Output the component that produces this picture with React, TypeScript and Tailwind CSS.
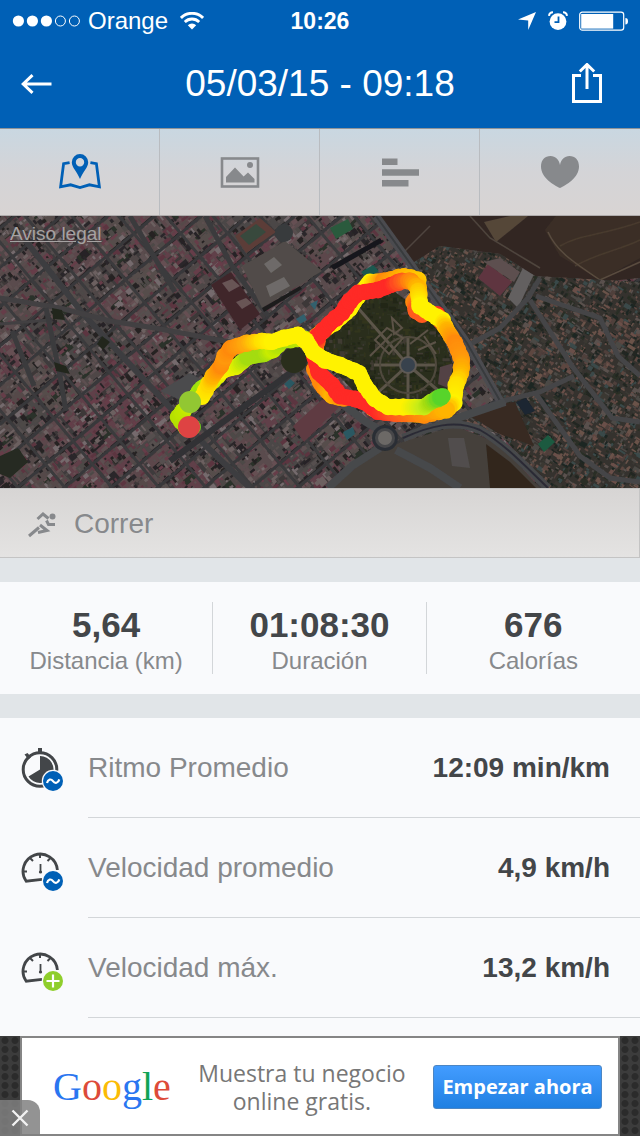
import type { ReactNode } from "react";

type Point = [number, number, string];

function seeded(seed: number) {
  let s = seed;
  return () => {
    s = (s * 1664525 + 1013904223) % 4294967296;
    return s / 4294967296;
  };
}

function mix(a: string, b: string, t: number) {
  const ch = (c: string, i: number) => parseInt(c.slice(1 + i * 2, 3 + i * 2), 16);
  const v = [0, 1, 2].map((i) => Math.round(ch(a, i) + (ch(b, i) - ch(a, i)) * t));
  return `rgb(${v.join(",")})`;
}

const LIME = "#a4dc10";
const GREEN = "#57d42a";
const YELLOW = "#fff200";
const AMBER = "#ffb400";
const ORANGE = "#ff8a0c";
const FLAME = "#ff5a1e";
const RED = "#ff2a26";

const TRACKS: Point[][] = [
  [[193, 211, "#6fc51c"], [186, 211, LIME], [178, 201, "#b5e000"], [190, 187, "#c8ec00"], [202, 172, "#9be010"], [213, 165, "#c8ec00"], [223, 154, YELLOW], [236, 151, "#e6f200"], [248, 141, LIME], [264, 138, LIME], [273, 134, "#c8ec00"], [283, 124, LIME], [305, 123, "#c4e800"]],
  [[202, 181, YELLOW], [209, 168, "#ffd800"], [213, 160, AMBER], [221, 150, ORANGE], [225, 140, "#ff980c"], [231, 132, ORANGE], [247, 127, "#ffa80c"], [262, 125, "#ffe000"], [272, 126, YELLOW], [284, 122, YELLOW], [298, 119, YELLOW], [306, 126, YELLOW]],
  [[316, 120, ORANGE], [334, 107, YELLOW], [350, 93, YELLOW], [358, 80, YELLOW], [370, 66, YELLOW], [384, 65, ORANGE], [404, 60, AMBER], [418, 64, "#ffc800"], [419, 77, "#ffb000"], [414, 86, ORANGE], [416, 95, FLAME], [422, 99, FLAME]],
  [[316, 132, ORANGE], [318, 120, RED], [330, 107, RED], [342, 97, RED], [350, 85, RED], [358, 77, RED], [378, 74, RED], [391, 69, RED], [402, 65, FLAME], [411, 65, ORANGE], [418, 72, AMBER], [420, 88, YELLOW]],
  [[437, 98, RED], [444, 110, ORANGE]],
  [[418, 75, "#ffc800"], [420, 90, YELLOW], [430, 97, YELLOW], [442, 104, YELLOW], [447, 114, AMBER], [455, 127, ORANGE], [462, 144, "#ff980c"], [461, 157, AMBER], [456, 169, "#ffe000"], [454, 187, YELLOW], [446, 194, AMBER], [424, 199, ORANGE], [398, 198, YELLOW], [373, 193, YELLOW]],
  [[314, 153, ORANGE], [323, 171, ORANGE], [332, 180, AMBER], [344, 183, ORANGE]],
  [[314, 140, RED], [319, 157, RED], [332, 169, RED], [340, 180, RED], [355, 183, RED], [366, 187, RED], [378, 196, RED], [397, 198, FLAME], [421, 198, ORANGE], [445, 193, AMBER]],
  [[306, 124, YELLOW], [313, 136, YELLOW], [325, 144, YELLOW], [340, 149, YELLOW], [359, 157, YELLOW], [365, 170, YELLOW], [375, 183, YELLOW], [388, 191, YELLOW], [407, 191, YELLOW], [424, 191, "#c8ec18"], [431, 186, LIME], [441, 181, GREEN], [443, 180, GREEN]],
];

function Track({ points, seed }: { points: Point[]; seed: number }) {
  const rnd = seeded(seed);
  const dots: ReactNode[] = [];
  for (let i = 0; i < points.length - 1; i++) {
    const [x1, y1, c1] = points[i];
    const [x2, y2, c2] = points[i + 1];
    const n = Math.max(2, Math.ceil(Math.hypot(x2 - x1, y2 - y1) / 2));
    for (let k = 0; k <= n; k++) {
      const t = k / n;
      const bump = k % 4 === 0 ? rnd() * 1.1 : 0;
      dots.push(<circle key={`${i}-${k}`} cx={x1 + (x2 - x1) * t} cy={y1 + (y2 - y1) * t} r={7.8 + bump} fill={mix(c1, c2, t)} />);
    }
  }
  return <g>{dots}</g>;
}

function roofs(seed: number, x0: number, y0: number, x1: number, y1: number, step: number, size: number, palette: string[]) {
  const rnd = seeded(seed);
  const out: ReactNode[] = [];
  for (let y = y0; y < y1; y += step) {
    for (let x = x0; x < x1; x += step) {
      const w = size * (0.3 + rnd() * rnd() * 1.6);
      const h = size * (0.3 + rnd() * rnd() * 1.4);
      const fill = palette[Math.floor(rnd() * palette.length)];
      out.push(<rect key={`${x}-${y}`} x={x + rnd() * 5} y={y + rnd() * 5} width={w} height={h} fill={fill} />);
    }
  }
  return out;
}

const CITY = ["#5d5051", "#564a4a", "#665053", "#663d48", "#5c3540", "#4e4847", "#6c6060", "#262325", "#2b282a", "#57504f", "#252322", "#746b6d"];
const VILLAS = ["#5d4641", "#4f3f3b", "#6a5249", "#232820", "#292e25", "#3b3833", "#6b5048", "#4c4845", "#1f2724", "#5a514e", "#3a4a4a"];

function blocks() {
  const rnd = seeded(19);
  const out: ReactNode[] = [];
  const tones = ["#544a4a", "#4f4747", "#5a4b4d", "#5c464b", "#4b4646", "#574e4c", "#603f48"];
  for (let r = -9; r < 13; r++) {
    for (let c = -11; c < 13; c++) {
      const x = c * 36 + (r % 3) * 5;
      const y = r * 30;
      out.push(
        <g key={`${r}:${c}`}>
          <rect x={x} y={y} width="32" height="26" fill={tones[Math.floor(rnd() * tones.length)]} />
          <rect x={x} y={y + 26} width="32" height="2" fill="#222123" />
          <rect x={x + 8 + rnd() * 6} y={y + 9} width={10 + rnd() * 6} height={4 + rnd() * 5} fill={rnd() > 0.6 ? "#2c3029" : "#3d3738"} />
        </g>,
      );
    }
  }
  return out;
}

function alleys() {
  const lines: ReactNode[] = [];
  for (let r = -9; r < 13; r++) {
    lines.push(<path key={`h${r}`} d={`M-420 ${r * 30 - 2}H460`} stroke="#39383a" strokeWidth="3" />);
  }
  for (let c = -11; c < 13; c++) {
    lines.push(<path key={`v${c}`} d={`M${c * 36 - 2} -280V400`} stroke="#3b3a3c" strokeWidth="3" />);
  }
  return lines;
}

function RouteMap() {
  return (
    <svg viewBox="0 0 640 272" preserveAspectRatio="xMidYMid slice" className="block h-full w-full" role="img" aria-label="Mapa del recorrido">
      <defs>
        <clipPath id="east"><path d="M408 50L440 30L500 38L535 60L640 66V272H548L500 218L455 205L505 188Z" /></clipPath>
        <clipPath id="park"><path d="M382 66L330 104L316 126L330 150L362 184L440 190L456 160L440 110Z" /></clipPath>
        <filter id="soft"><feGaussianBlur stdDeviation="0.6" /></filter>
      </defs>
      <rect width="640" height="272" fill="#3e3b3c" />
      <g filter="url(#soft)">
        <g transform="translate(120 110) rotate(-40)">
          {blocks()}
          {roofs(7, -380, -280, 440, 400, 5, 6, CITY)}
          {alleys()}
        </g>
        <path d="M25 24L85 100L150 170L207 231L250 272" fill="none" stroke="#3d3e40" strokeWidth="6" />
        <path d="M0 82L60 92L110 105L155 112L240 128" fill="none" stroke="#424042" strokeWidth="5" />
        <path d="M0 108L50 104" stroke="#424042" strokeWidth="3" />
        <path d="M46 92L60 160L66 195M12 115L34 170M130 0L175 76M205 0L232 50L268 100" fill="none" stroke="#3b3b3e" strokeWidth="5" />
        <path d="M170 245L238 195L300 150L320 120" fill="none" stroke="#303135" strokeWidth="6" />
        <path d="M242 50L285 25L322 55L262 92Z" fill="#514c48" />
        <path d="M264 48l10-7 8 8-11 8zM266 70l18-9 6 9-20 11z" fill="#6e6b69" />
        <path d="M262 92L300 70L302 73L264 96Z" fill="#1e1d1f" />
        <path d="M211 69L231 56L260 98L240 114Z" fill="#41262c" />
        <path d="M222 67l10-4 8 7-11 6zM236 86l10-4 6 5-10 6z" fill="#675455" />
        <path d="M235 20L260 2L276 16L246 37Z" fill="#5b3d38" />
        <path d="M240 20L256 8L266 16L249 29Z" fill="#38483e" />
        <circle cx="284" cy="17" r="9" fill="#383b3d" />
        <path d="M293 210L324 182L340 190L304 226Z" fill="#5e3a42" />
        <path d="M160 175L190 157L208 168L185 186Z" fill="#4b4b4e" />
        <circle cx="294" cy="144" r="13" fill="#2a2f1c" />
        <path d="M0 240L18 232L28 246L10 262L0 258Z" fill="#252b20" />
        <path d="M52 92l10 2 3 10-12-1zM102 120l8 6-7 8-6-6zM54 146l12 4 4 8-14-3z" fill="#22281f" />
        <path d="M330 12l18-9 5 10-17 10z" fill="#2a5a3e" />
        <path d="M361 56l12-7 6 6-12 8z" fill="#1f5850" />
        <path d="M330 50L380 22L383 26L334 54Z" fill="#19181b" />
        <path d="M310 88l8-4-3 10zM296 103l8-5 3 6-7 4z" fill="#32606d" />
        <path d="M284 168l6-5 5 4-6 6zM343 216l10-5 2 7-8 6z" fill="#2b5962" />
      </g>
      <g filter="url(#soft)">
        <path d="M372 0H640V62L600 66L535 60L500 38L440 30L408 50Z" fill="#332824" />
        <path d="M545 14L556 0H640V42L600 64L560 40Z" fill="#3b2f27" />
        <path d="M484 6L510 0H528L496 26Z" fill="#554639" />
        <path d="M560 30C580 18 600 20 640 6M575 50C600 36 620 34 640 24" fill="none" stroke="#483a2e" strokeWidth="1.500" />
        <path d="M548 16C556 34 570 44 600 64L640 46" fill="none" stroke="#5a4c3f" strokeWidth="1.500" />
        <path d="M470 0L490 22L540 52M430 10L400 40" fill="none" stroke="#4f453d" strokeWidth="1.500" />
        <g clipPath="url(#east)">
          <rect x="400" y="20" width="240" height="252" fill="#34322e" />
          <g transform="translate(520 150) rotate(32)">{roofs(31, -180, -170, 200, 180, 4, 5, VILLAS)}</g>
          <path d="M478 62L488 48L512 66L500 80Z" fill="#5e3640" />
          <path d="M484 46L500 42L520 56L514 66Z" fill="#5d5050" />
          <path d="M508 82L524 50L534 58L518 92Z" fill="#636060" />
          <path d="M458 135L500 112L528 82L540 62M536 80L600 102L618 140L640 160M530 84L572 150L612 202L640 206M503 185L540 176L574 160M536 178L580 240L610 262L640 266" fill="none" stroke="#454547" strokeWidth="5" />
          <path d="M478 190L515 186L534 230L500 218L470 200Z" fill="#372a23" />
          <path d="M516 186l10-4 9 13-10 4z" fill="#1c2530" />
          <path d="M538 228l10-9 7 7-11 10z" fill="#1b5a41" />
          <path d="M462 150L480 160L496 180L470 196L460 190Z" fill="#51443a" opacity="0.800" />
        </g>
        <path d="M376 0L412 50L467 127L503 190" fill="none" stroke="#4b4c50" strokeWidth="8" />
        <path d="M376 0L412 50L467 127L503 190" fill="none" stroke="#393a3e" strokeWidth="2" />
      </g>
      <g filter="url(#soft)">
        <path d="M382 66L330 104L316 126L330 150L362 184L440 190L456 160L440 110Z" fill="#2b2e1f" />
        <g clipPath="url(#park)">
          {roofs(63, 320, 62, 460, 195, 5, 5, ["#2d3120", "#242919", "#33351f", "#3f3b32", "#212619"])}
          <path d="M358 92L408 149V200M408 149V120M408 149L372 182M408 149H374M408 149L440 176M408 149H436" fill="none" stroke="#5b5448" strokeWidth="3" />
          <circle cx="408" cy="149" r="28" fill="none" stroke="#504a3e" strokeWidth="2" />
          <path d="M375 124l12-12 16 10-14 16zM392 102l10 10-8 6zM370 140l22-22M410 128l18-14M418 134l18-8M424 120l12 18" fill="none" stroke="#5b5246" strokeWidth="2" />
          <path d="M440 151L454 147L448 172L438 168Z" fill="#524245" />
        </g>
        <circle cx="408" cy="149" r="9" fill="#5f5a55" />
        <circle cx="408" cy="149" r="7" fill="#37424d" />
        <path d="M380 234L403 226L455 210L500 228L540 272H328Z" fill="#45403b" />
        <path d="M448 222L464 222L470 252L452 250Z" fill="#514e4d" />
        <path d="M486 228L510 246L536 272H490Z" fill="#32261f" />
        <path d="M340 186L366 206L380 214M380 232L352 250L328 272M403 222C430 210 455 203 480 214C505 228 525 250 548 272M440 208L505 186M396 234L430 252L460 272" fill="none" stroke="#46484c" strokeWidth="8" />
        <path d="M403 222C430 210 455 203 480 214C505 228 525 250 548 272" fill="none" stroke="#2c2b34" strokeWidth="2" />
        <circle cx="385" cy="222" r="13" fill="#2c2f34" />
        <circle cx="385" cy="222" r="10" fill="#46474a" />
        <circle cx="385" cy="222" r="7" fill="#6c6966" />
      </g>
      {TRACKS.map((t, i) => <Track key={i} points={t} seed={i + 3} />)}
      <circle cx="190" cy="186" r="11" fill="#92c732" />
      <circle cx="189" cy="211" r="11" fill="#de4343" />
    </svg>
  );
}

function StatusBar() {
  return (
    <div className="grid h-10 grid-cols-[1fr_auto_1fr] items-center px-3 pt-px text-white">
      <div className="flex items-center gap-2">
        <svg width="68" height="12" viewBox="0 0 68 12" fill="none" aria-label="Señal">
          {[6.4, 20.4, 34.4].map((x) => <circle key={x} cx={x} cy="6" r="5.600" fill="#fff" />)}
          {[48.4, 62.4].map((x) => <circle key={x} cx={x} cy="6" r="5" stroke="#fff" />)}
        </svg>
        <span className="text-[24px] leading-8">Orange</span>
        <svg width="24" height="18" viewBox="0 0 24 18" className="ml-1" fill="none" stroke="#fff" aria-label="Wi-Fi">
          <path d="M0.9 5.9A15.8 15.8 0 0 1 23.1 5.9" strokeWidth="3" />
          <path d="M4.8 10A10.2 10.2 0 0 1 19.2 10" strokeWidth="2.800" />
          <path d="M7.8 13.3A6 6 0 0 1 16.2 13.3L12 17.6Z" fill="#fff" stroke="none" />
        </svg>
      </div>
      <time className="text-[23px] leading-8 font-bold">10:26</time>
      <div className="flex items-center justify-end gap-[11px]">
        <svg width="20" height="20" viewBox="0 0 20 20" fill="#fff" aria-label="Ubicación"><path d="M19 1L11.2 19V9.4L1 8.6Z" /></svg>
        <svg width="20" height="20" viewBox="0 0 20 20" fill="none" aria-label="Alarma">
          <circle cx="10" cy="10.600" r="8.400" fill="#fff" />
          <path d="M10.5 5.5V11.2H6.5" stroke="#0060b6" strokeWidth="1.800" />
          <path d="M1 4.8A4 4 0 0 1 5 1.2M19 4.8A4 4 0 0 0 15 1.2" stroke="#fff" strokeWidth="2" />
        </svg>
        <svg width="49" height="20" viewBox="0 0 49 20" fill="none" aria-label="Batería">
          <rect x="0.700" y="1.200" width="44" height="18" rx="2.600" stroke="#fff" strokeWidth="1.200" />
          <rect x="2.200" y="3" width="32" height="14.600" fill="#fff" />
          <path d="M46.400 7Q49 7 49 10.200T46.400 13.600Z" fill="#fff" />
        </svg>
      </div>
    </div>
  );
}

const TABS: { label: string; icon: ReactNode }[] = [
  {
    label: "Mapa",
    icon: (
      <svg width="42" height="36" viewBox="0 0 42 36" fill="none">
        <path d="M10.6 8.6L4.6 9.6L1.6 32.8L11.6 30.8L21 33.6L30.4 30.8L40.4 32.8L37.4 9.6L31.4 8.6" stroke="#0060b6" strokeWidth="2.800" />
        <path fillRule="evenodd" d="M21 0A8.200 8.200 0 0 0 12.800 8.200C12.800 13.500 18 17.500 21 25C24 17.500 29.200 13.500 29.200 8.200A8.200 8.200 0 0 0 21 0ZM21 4A4.200 4.200 0 1 1 21 12.400A4.200 4.200 0 0 1 21 4Z" fill="#0060b6" />
      </svg>
    ),
  },
  {
    label: "Fotos",
    icon: (
      <svg width="40" height="36" viewBox="0 0 40 36" fill="none">
        <rect x="2" y="4.500" width="36" height="28" stroke="#87898c" strokeWidth="2.600" />
        <path d="M6 28.500V23L15 13.500L23.600 22.400L28 18.500L34.500 25V28.500Z" fill="#87898c" />
        <circle cx="30" cy="11" r="3" fill="#87898c" />
      </svg>
    ),
  },
  {
    label: "Vueltas",
    icon: (
      <svg width="38" height="36" viewBox="0 0 38 36" fill="#87898c">
        <path d="M1 4.500h15.500v6.500H1zM1 15.200h37v6.500H1zM1 26h26.500v6.500H1z" />
      </svg>
    ),
  },
  {
    label: "Frecuencia cardíaca",
    icon: (
      <svg width="40" height="36" viewBox="0 0 40 36" fill="#87898c">
        <path d="M20 34C14 31 1 24 1 12.500C1 6 5 2 10.500 2C15.500 2 19 5.500 20 11C21 5.500 24.500 2 29.500 2C35 2 39 6 39 12.500C39 24 26 31 20 34Z" />
      </svg>
    ),
  },
];

function Badge({ kind }: { kind: "avg" | "max" }) {
  return (
    <g>
      <circle cx="33" cy="41" r="11.200" fill="#f9fafc" />
      <circle cx="33" cy="41" r="10" fill={kind === "avg" ? "#0060b6" : "#8fce2c"} />
      {kind === "avg" ? (
        <path d="M27 43C28 39 31 38.500 33 41.200S38.300 43.200 39.300 39.400" fill="none" stroke="#fff" strokeWidth="2.200" />
      ) : (
        <path d="M33 34.500V47.500M26.500 41H39.500" stroke="#fff" strokeWidth="2.200" />
      )}
    </g>
  );
}

function StopwatchIcon() {
  return (
    <svg width="44" height="52" viewBox="0 2 44 52" fill="none">
      <circle cx="20" cy="29.500" r="16.800" stroke="#434649" strokeWidth="3" />
      <path d="M18 8h4v5h-4zM4.500 14.500l3-1.500 3.500 4-2.500 2.500z" fill="#434649" />
      <path d="M20 16A13.500 13.500 0 1 1 8.500 36.500L20 29.500Z" fill="#434649" />
      <Badge kind="avg" />
    </svg>
  );
}

function GaugeIcon({ kind }: { kind: "avg" | "max" }) {
  return (
    <svg width="44" height="52" viewBox="0 2 44 52" fill="none">
      <path d="M37.400 30A17.200 17.200 0 1 0 6.200 41.200L22 39.400" stroke="#434649" strokeWidth="2.800" />
      <path d="M20 14v4M10 18l3 3M30.500 18l-3 3M3 31.500h4" stroke="#434649" strokeWidth="2" />
      <path d="M20.500 24v9" stroke="#434649" strokeWidth="1.800" />
      <circle cx="20.500" cy="32" r="1.600" fill="#434649" />
      <Badge kind={kind} />
    </svg>
  );
}

const TOTALS = [
  { value: "5,64", label: "Distancia (km)" },
  { value: "01:08:30", label: "Duración" },
  { value: "676", label: "Calorías" },
];

const METRICS = [
  { label: "Ritmo Promedio", value: "12:09 min/km", icon: <StopwatchIcon /> },
  { label: "Velocidad promedio", value: "4,9 km/h", icon: <GaugeIcon kind="avg" /> },
  { label: "Velocidad máx.", value: "13,2 km/h", icon: <GaugeIcon kind="max" /> },
];

function AdBanner() {
  return (
    <aside className="relative h-[100px] bg-[#303030] bg-[radial-gradient(circle,#2b2b2b_3px,#3c3c3c_4px)] bg-size-[10px_9px] px-5">
      <div className="flex h-full items-center justify-between border-2 border-[#858585] bg-white pt-0.5 pr-4 pl-[31px]">
        <div className="font-['Liberation_Serif',serif] text-[40px] leading-[48px]" aria-label="Google">
          <span className="text-[#2a76f0]">G</span>
          <span className="text-[#dd4b39]">o</span>
          <span className="text-[#fbbc05]">o</span>
          <span className="text-[#2a76f0]">g</span>
          <span className="text-[#10a355]">l</span>
          <span className="text-[#dd4b39]">e</span>
        </div>
        <p className="text-center font-['Open_Sans',sans-serif] text-[23px] leading-7 text-[#777777]">
          Muestra tu negocio
          <br />
          online gratis.
        </p>
        <button type="button" className="h-11 w-[169px] rounded-[3px] border border-[#4c86c4] bg-linear-to-b from-[#429cff] to-[#1f80e2] font-['Open_Sans',sans-serif] text-[20px] font-bold text-white">
          Empezar ahora
        </button>
      </div>
      <button type="button" aria-label="Cerrar anuncio" className="absolute bottom-0 left-0 flex h-9 w-10 items-center justify-center rounded-tr-xl bg-[#808080]/85">
        <svg width="18" height="18" viewBox="0 0 18 18" stroke="#f2f2f2" strokeWidth="2.400"><path d="M1.500 1.500L16.500 16.500M16.500 1.500L1.500 16.500" /></svg>
      </button>
    </aside>
  );
}

export default function App() {
  return (
    <div className="flex min-h-screen flex-col bg-[#e1e5e8] font-['Liberation_Sans',sans-serif]">
      <header className="bg-[#0060b6] text-white">
        <StatusBar />
        <div className="grid h-[88px] grid-cols-[1fr_auto_1fr] items-center pr-9 pl-5">
          <button type="button" aria-label="Volver" className="flex w-9 items-center">
            <svg width="32" height="20" viewBox="0 0 32 20" fill="none" stroke="#fff" strokeWidth="3"><path d="M31.500 10H3M12.500 1.200L3.200 10L12.500 18.800" /></svg>
          </button>
          <h1 className="pl-4 text-[37px] leading-[44px]">05/03/15 - 09:18</h1>
          <button type="button" aria-label="Compartir" className="justify-self-end">
            <svg width="34" height="42" viewBox="0 0 34 42" fill="none" stroke="#fff" strokeWidth="3"><path d="M11 12.500H3.500V38.500H30.500V12.500H23M17 26V2M9.800 8.500L17 1.500L24.200 8.500" /></svg>
          </button>
        </div>
      </header>

      <nav className="grid h-[88px] grid-cols-4 border-t border-b border-t-[#8f9499] border-b-[#aeabab] bg-linear-to-b from-[#c9d7e1] via-[#d4d4d7] to-[#d8d4d3]">
        {TABS.map((tab) => (
          <button key={tab.label} type="button" aria-label={tab.label} className="flex items-center justify-center border-r border-[#b9bcc0] last:border-r-0">
            {tab.icon}
          </button>
        ))}
      </nav>

      <section className="relative h-[272px] overflow-hidden">
        <RouteMap />
        <a href="#aviso" className="absolute top-1 left-[10px] text-[19px] leading-7 text-[#a5a2a2] underline">Aviso legal</a>
      </section>

      <div className="flex h-[70px] items-center gap-4 border-t border-r border-b border-[#c4c4c4] bg-linear-to-b from-[#d7d5d4] to-[#e4e3e2] px-7 pt-0.5 text-[#87898c]">
        <svg width="30" height="28" viewBox="0 0 30 28" fill="none" stroke="#87898c" strokeWidth="3">
          <path d="M9.500 9L15 4L20.500 8.500" />
          <circle cx="24.500" cy="6.500" r="3" fill="#87898c" stroke="none" />
          <path d="M18.500 10.500L20.500 14.500H27M1 26L11 17.500M12 15L19 20.500L10 22.500" />
        </svg>
        <span className="text-[28px] leading-9">Correr</span>
      </div>

      <section className="mt-6 grid grid-cols-3 bg-[#f9fafc] py-5">
        {TOTALS.map((item) => (
          <div key={item.label} className="flex flex-col items-center border-r border-[#d3d6d9] last:border-r-0">
            <strong className="text-[35px] leading-[46px] text-[#434649]">{item.value}</strong>
            <span className="text-[24px] leading-[26px] text-[#87898c]">{item.label}</span>
          </div>
        ))}
      </section>

      <ul className="mt-6 grow bg-[#f9fafc]">
        {METRICS.map((item) => (
          <li key={item.label} className="flex h-[100px] pl-5">
            <div className="flex w-[68px] items-center">{item.icon}</div>
            <div className="flex flex-1 items-center justify-between border-b border-[#d3d6d9] pr-[30px] text-[28px] leading-9">
              <span className="text-[#87898c]">{item.label}</span>
              <strong className="text-[#434649]">{item.value}</strong>
            </div>
          </li>
        ))}
      </ul>

      <AdBanner />
    </div>
  );
}
